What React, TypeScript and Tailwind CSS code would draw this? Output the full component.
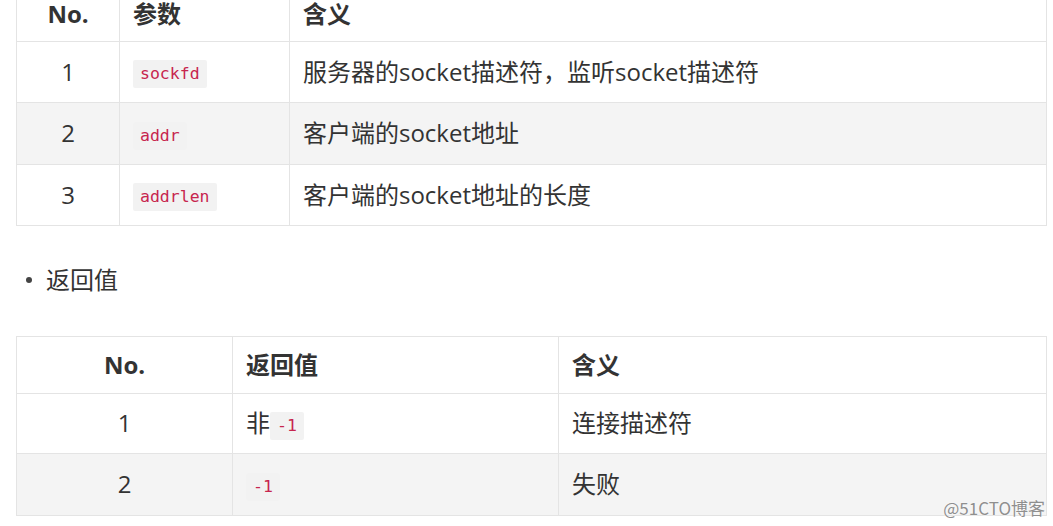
const sans = "font-['Open_Sans','Noto_Sans_CJK_SC',sans-serif]";

function Code({ children }: { children: string }) {
  return (
    <code className="inline-block rounded-[2px] bg-[#f2f2f2] px-[7px] py-[3px] font-['DejaVu_Sans_Mono','Liberation_Mono',monospace] text-[16.5px] leading-[22px] text-[#c7254e] align-middle">
      {children}
    </code>
  );
}

const cell = "border border-[#e4e4e4] px-[13px] align-middle";
const head = "border border-[#e4e4e4] px-[13px] align-middle font-bold leading-[24px]";

function ParamTable() {
  const rows = [
    { no: "1", param: "sockfd", meaning: "服务器的socket描述符，监听socket描述符", h: "h-[61px]" },
    { no: "2", param: "addr", meaning: "客户端的socket地址", h: "h-[62px]" },
    { no: "3", param: "addrlen", meaning: "客户端的socket地址的长度", h: "h-[61px]" },
  ];
  return (
    <table className="w-[1031px] table-fixed border-collapse">
      <colgroup>
        <col className="w-[103px]" />
        <col className="w-[170px]" />
        <col />
      </colgroup>
      <thead>
        {/* header row is cropped at the top of the shot */}
        <tr className="h-[41px]">
          <th className={`${head} border-t-0 pb-[12px] text-center`}>No.</th>
          <th className={`${head} border-t-0 pb-[12px] text-left`}>参数</th>
          <th className={`${head} border-t-0 pb-[12px] text-left`}>含义</th>
        </tr>
      </thead>
      <tbody>
        {rows.map((r, i) => (
          <tr key={r.no} className={`${r.h} ${i % 2 === 1 ? "bg-[#f4f4f4]" : "bg-white"}`}>
            <td className={`${cell} text-center`}>{r.no}</td>
            <td className={cell}>
              <Code>{r.param}</Code>
            </td>
            <td className={cell}>{r.meaning}</td>
          </tr>
        ))}
      </tbody>
    </table>
  );
}

function ReturnTable() {
  return (
    <table className="w-[1031px] table-fixed border-collapse">
      <colgroup>
        <col className="w-[216px]" />
        <col className="w-[326px]" />
        <col />
      </colgroup>
      <thead>
        <tr className="h-[57px]">
          <th className={`${head} text-center`}>No.</th>
          <th className={`${head} text-left`}>返回值</th>
          <th className={`${head} text-left`}>含义</th>
        </tr>
      </thead>
      <tbody>
        <tr className="h-[60px] bg-white">
          <td className={`${cell} text-center`}>1</td>
          <td className={cell}>
            非<Code>-1</Code>
          </td>
          <td className={cell}>连接描述符</td>
        </tr>
        <tr className="h-[62px] bg-[#f4f4f4]">
          <td className={`${cell} text-center`}>2</td>
          <td className={cell}>
            <Code>-1</Code>
          </td>
          <td className={cell}>失败</td>
        </tr>
      </tbody>
    </table>
  );
}

export default function App() {
  return (
    <div className={`relative h-[526px] w-[1053px] overflow-hidden bg-white pl-[16px] text-[24px] text-[#333] ${sans}`}>
      <ParamTable />
      <div className="flex h-[110px] items-center pb-[1px] pl-[10px]">
        <span className="mr-[14px] h-[6px] w-[6px] rounded-full bg-[#444]" />
        <span>返回值</span>
      </div>
      <ReturnTable />
      <span className="absolute right-[8px] bottom-[10px] text-[17px] leading-none text-[#8f8f8f] [text-shadow:0_0_2px_#fff] font-['Noto_Sans_CJK_SC',sans-serif]">
        @51CTO博客
      </span>
    </div>
  );
}
